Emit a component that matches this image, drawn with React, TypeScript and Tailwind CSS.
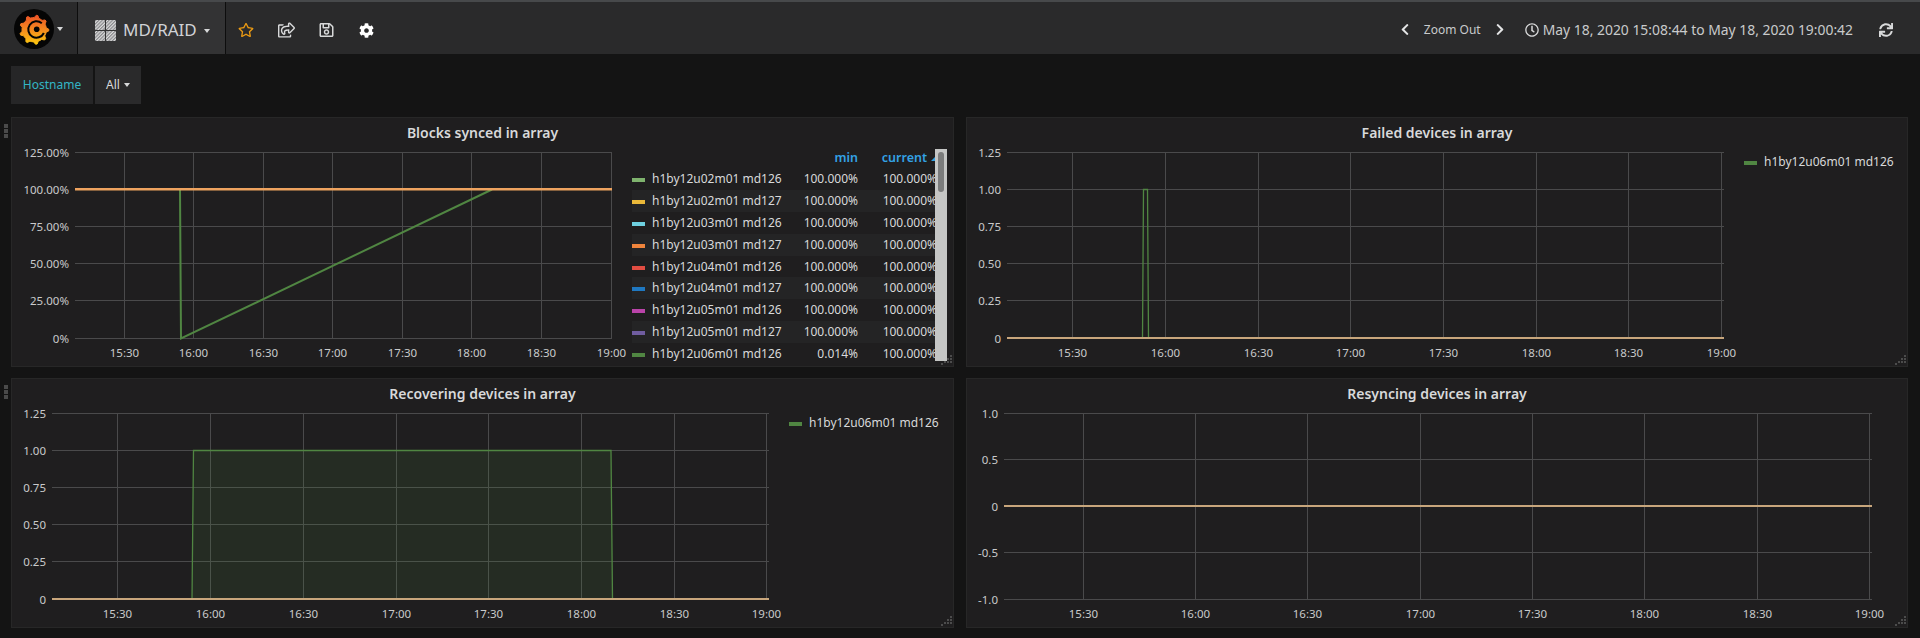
import React from "react";
import { FaRegStar, FaRegShareSquare, FaRegSave, FaCog, FaChevronLeft, FaChevronRight, FaRegClock, FaSync } from "react-icons/fa";

const FONT = '"Noto Sans","Open Sans",sans-serif';

function gearPath(cx: number, cy: number, rOut: number, rIn: number, teeth: number) {
  const pts: string[] = [];
  for (let i = 0; i < teeth; i++) {
    const a = (i / teeth) * Math.PI * 2 - Math.PI / 2 + 0.2;
    const s = (Math.PI * 2) / teeth;
    const list: [number, number][] = [
      [a - s * 0.5, rIn],
      [a - s * 0.28, rIn],
      [a - s * 0.08, rOut],
      [a + s * 0.08, rOut],
      [a + s * 0.28, rIn],
    ];
    for (const [t, r] of list) pts.push(`${(cx + Math.cos(t) * r).toFixed(2)},${(cy + Math.sin(t) * r).toFixed(2)}`);
  }
  return "M" + pts.join("L") + "Z";
}

function Logo() {
  return (
    <svg width="40" height="40" viewBox="0 0 40 40" className="shrink-0">
      <defs>
        <linearGradient id="grafana" x1="0" y1="0" x2="0" y2="1">
          <stop offset="0" stopColor="#ec5226" />
          <stop offset="0.5" stopColor="#f58a1f" />
          <stop offset="1" stopColor="#fcc80f" />
        </linearGradient>
      </defs>
      <circle cx="20" cy="20" r="20" fill="#050505" />
      <path d={gearPath(20.2, 20.7, 14.6, 12.2, 9)} fill="url(#grafana)" stroke="url(#grafana)" strokeWidth="1" strokeLinejoin="round" />
      <path d="M27.8 14.2 A8.2 8.2 0 1 0 29.9 24" fill="none" stroke="#050505" strokeWidth="2" />
      <path d="M27.5 20.5 A5.2 5.2 0 1 0 23 25.2" fill="none" stroke="#f7a31c" strokeWidth="0" />
      <circle cx="22.7" cy="20.2" r="2.8" fill="#050505" />
    </svg>
  );
}

function Caret() {
  return <span className="inline-block w-0 h-0 border-x-[3.5px] border-t-[4px] border-x-transparent border-t-[#d8d9da]" />;
}

function GridIcon() {
  return (
    <svg width="21" height="21" viewBox="0 0 21 21" className="shrink-0">
      <defs>
        <pattern id="hatch" width="2.4" height="2.4" patternUnits="userSpaceOnUse" patternTransform="rotate(45)">
          <rect width="2.4" height="2.4" fill="#dcdcdc" />
          <rect width="1.2" height="2.4" fill="#86878a" />
        </pattern>
      </defs>
      <rect x="0" y="0" width="10" height="10" rx="1" fill="url(#hatch)" />
      <rect x="11" y="0" width="10" height="10" rx="1" fill="url(#hatch)" />
      <rect x="0" y="11" width="10" height="10" rx="1" fill="url(#hatch)" />
      <rect x="11" y="11" width="10" height="10" rx="1" fill="url(#hatch)" />
    </svg>
  );
}

type Line = { d: string; color: string; width: number; fill?: string };
type ChartProps = {
  x0: number;
  y0: number;
  w: number;
  h: number;
  left: number;
  right: number;
  xTicks: number[];
  yTicks: { y: number; label: string }[];
  lines: Line[];
  labelY: number;
};

const TIMES = ["15:30", "16:00", "16:30", "17:00", "17:30", "18:00", "18:30", "19:00"];

function Chart({ x0, y0, w, h, left, right, xTicks, yTicks, lines, labelY }: ChartProps) {
  const top = yTicks[0].y;
  const bottom = yTicks[yTicks.length - 1].y;
  return (
    <svg width={w} height={h} viewBox={`${x0} ${y0} ${w} ${h}`} className="shrink-0 block">
      <g shapeRendering="crispEdges" stroke="#4a4a4b" strokeWidth="1">
        {yTicks.map((t) => (
          <line key={t.y} x1={left} x2={right} y1={t.y + 0.5} y2={t.y + 0.5} />
        ))}
        {xTicks.map((x) => (
          <line key={x} x1={x + 0.5} x2={x + 0.5} y1={top} y2={bottom} />
        ))}
      </g>
      {lines.map((l, i) => (
        <path key={i} d={l.d} fill={l.fill ?? "none"} stroke={l.color} strokeWidth={l.width} />
      ))}
      <g fontSize="11.5" fill="#c9cacb" fontFamily={FONT}>
        {yTicks.map((t) => (
          <text key={t.label} x={left - 6} y={t.y + 4.5} textAnchor="end">
            {t.label}
          </text>
        ))}
        {xTicks.map((x, i) => (
          <text key={x} x={x + 0.5} y={labelY} textAnchor="middle">
            {TIMES[i]}
          </text>
        ))}
      </g>
    </svg>
  );
}

function Panel({ title, handle, children }: { title: string; handle?: boolean; children: React.ReactNode }) {
  return (
    <div className="relative h-[250px] box-border border border-[#272727] bg-[#1f1e1f] flex flex-col">
      {handle && (
        <div className="absolute left-[-8px] top-[6px] flex flex-col gap-[1px]">
          <span className="block w-[4px] h-[4px] bg-[#4a4a4a]" />
          <span className="block w-[4px] h-[4px] bg-[#4a4a4a]" />
          <span className="block w-[4px] h-[4px] bg-[#4a4a4a]" />
        </div>
      )}
      <div className="h-[27px] flex items-center justify-center text-[14px] font-semibold text-[#d8d9da] pt-[1px]">{title}</div>
      <div className="flex-1 flex min-h-0">{children}</div>
      <svg width="12" height="12" viewBox="0 0 12 12" className="absolute right-0 bottom-0" fill="#4c4c4c">
        <rect x="9" y="1" width="2" height="2" />
        <rect x="6" y="4" width="2" height="2" />
        <rect x="9" y="4" width="2" height="2" />
        <rect x="3" y="7" width="2" height="2" />
        <rect x="6" y="7" width="2" height="2" />
        <rect x="9" y="7" width="2" height="2" />
        <rect x="0" y="9" width="2" height="2" />
      </svg>
    </div>
  );
}

const ROWS = [
  ["#7eb26d", "h1by12u02m01 md126", "100.000%"],
  ["#eab839", "h1by12u02m01 md127", "100.000%"],
  ["#6ed0e0", "h1by12u03m01 md126", "100.000%"],
  ["#ef843c", "h1by12u03m01 md127", "100.000%"],
  ["#e24d42", "h1by12u04m01 md126", "100.000%"],
  ["#1f78c1", "h1by12u04m01 md127", "100.000%"],
  ["#ba43a9", "h1by12u05m01 md126", "100.000%"],
  ["#705da0", "h1by12u05m01 md127", "100.000%"],
  ["#508642", "h1by12u06m01 md126", "0.014%"],
];

function LegendName({ color, name }: { color: string; name: string }) {
  return (
    <>
      <span className="block w-[13px] h-[4px] mt-[2px] mr-[7px] shrink-0" style={{ background: color }} />
      <span className="whitespace-nowrap text-[#d8d9da] text-[12px]">{name}</span>
    </>
  );
}

function TableLegend() {
  return (
    <div className="mt-[4px] w-[315px] h-[212px] overflow-hidden flex shrink-0">
      <div className="w-[303px] overflow-hidden">
        <div className="w-[320px]">
          <div className="h-[19px] flex items-center text-[12.5px] font-semibold text-[#33a2e5]">
            <span className="w-[226px] text-right">min</span>
            <span className="w-[69px] text-right">current</span>
            <span className="ml-[4px] w-0 h-0 border-x-[4px] border-b-[4px] border-x-transparent border-b-[#33a2e5]" />
          </div>
          {ROWS.map((r, i) => (
            <div key={r[1]} className={`h-[21.9px] flex items-center ${i % 2 === 1 ? "bg-[#242425]" : ""}`}>
              <LegendName color={r[0]} name={r[1]} />
              <span className="flex-1" />
              <span className="w-[70px] text-right text-[12px] text-[#d8d9da]">{r[2]}</span>
              <span className="w-[79px] mr-[15px] text-right text-[12px] text-[#d8d9da]">100.000%</span>
            </div>
          ))}
        </div>
      </div>
      <div className="w-[12px] bg-[#c5c6c5] pt-[3px] pl-[3px]">
        <div className="w-[6px] h-[40px] rounded-[3px] bg-[#7b7c7c]" />
      </div>
    </div>
  );
}

function SimpleLegend() {
  return (
    <div className="pt-[8px] flex items-center h-[26px]">
      <LegendName color="#508642" name="h1by12u06m01 md126" />
    </div>
  );
}

const yRow1 = (labels: string[]) => [152, 189, 226, 263, 300, 338].map((y, i) => ({ y, label: labels[i] }));
const yRow2 = (labels: string[]) => [413, 450, 487, 524, 561, 599].map((y, i) => ({ y, label: labels[i] }));
const DEC = ["1.25", "1.00", "0.75", "0.50", "0.25", "0"];

export default function App() {
  return (
    <div className="w-[1920px] h-[638px] overflow-hidden bg-[#141414]" style={{ fontFamily: FONT }}>
      <div className="h-[2px] bg-[#47494b]" />
      <div className="h-[52px] bg-[#2a2a2b] flex items-center text-[#d8d9da]">
        <div className="w-[77px] h-full flex items-center pl-[14px] gap-[3px] mt-[2px]">
          <Logo />
          <Caret />
        </div>
        <div className="h-full w-[149px] box-border bg-[#333334] border-x border-[#0d0d0d] flex items-center pl-[17px] pt-[4px]">
          <GridIcon />
          <span className="ml-[7px] text-[17px] text-[#d0d2d6]">MD/RAID</span>
          <span className="ml-[7px] mt-[2px] flex"><Caret /></span>
        </div>
        <div className="flex items-center text-[16px] ml-[12px] mt-[4px]">
          <FaRegStar className="text-[#eb9a13] w-[16px] h-[16px]" />
          <FaRegShareSquare className="ml-[24px] w-[17px] h-[16px]" />
          <FaRegSave className="ml-[24px] w-[15px] h-[16px]" />
          <FaCog className="ml-[25px] w-[15px] h-[15px] text-white" />
        </div>
        <div className="flex-1" />
        <div className="flex items-center mt-[4px]">
          <FaChevronLeft className="w-[10px] h-[13px] text-[#e4e5e6]" />
          <span className="ml-[14px] text-[12px] text-[#c9cacb]">Zoom Out</span>
          <FaChevronRight className="ml-[14px] w-[10px] h-[13px] text-[#e4e5e6]" />
          <FaRegClock className="ml-[20px] w-[14px] h-[14px]" />
          <span className="ml-[4px] text-[13.9px] whitespace-nowrap text-[#c9cacb]">May 18, 2020 15:08:44 to May 18, 2020 19:00:42</span>
          <FaSync className="ml-[26px] mr-[27px] w-[14px] h-[14px]" />
        </div>
      </div>
      <div className="pl-[11px] pt-[12px] h-[63px] flex gap-[2px]">
        <div className="w-[82px] h-[38px] bg-[#262627] flex items-center justify-center text-[12px] text-[#33b5c5]">Hostname</div>
        <div className="w-[46px] h-[38px] bg-[#2a2a2b] flex items-center justify-center gap-[4px] text-[12px] text-[#d8d9da]">
          All <Caret />
        </div>
      </div>
      <div className="pl-[11px] grid grid-cols-[943px_942px] gap-x-[12px] gap-y-[11px]">
        <Panel title="Blocks synced in array" handle>
          <Chart
            x0={12}
            y0={145}
            w={620}
            h={221}
            left={75}
            right={612}
            labelY={357}
            xTicks={[124, 193, 263, 332, 402, 471, 541, 611]}
            yTicks={yRow1(["125.00%", "100.00%", "75.00%", "50.00%", "25.00%", "0%"])}
            lines={[
              { d: "M180 189.5 L181 338.5 L492 189.5", color: "#508642", width: 2 },
              { d: "M75 189.3 H612", color: "#eea35f", width: 2.6 },
            ]}
          />
          <TableLegend />
        </Panel>
        <Panel title="Failed devices in array">
          <Chart
            x0={967}
            y0={145}
            w={777}
            h={221}
            left={1007}
            right={1724}
            labelY={357}
            xTicks={[1072, 1165, 1258, 1350, 1443, 1536, 1628, 1721]}
            yTicks={yRow1(DEC)}
            lines={[
              { d: "M1142.5 338 L1143.5 189.5 H1147.5 L1148.5 338", color: "#508642", width: 1.3 },
              { d: "M1007 338 H1724", color: "#c8a67c", width: 2 },
            ]}
          />
          <SimpleLegend />
        </Panel>
        <Panel title="Recovering devices in array" handle>
          <Chart
            x0={12}
            y0={406}
            w={777}
            h={221}
            left={52}
            right={769}
            labelY={618}
            xTicks={[117, 210, 303, 396, 488, 581, 674, 766]}
            yTicks={yRow2(DEC)}
            lines={[
              { d: "M192 599.5 L193.5 450.5 H611 L612.5 599.5 Z", color: "none", width: 0, fill: "rgba(80,134,66,0.14)" },
              { d: "M192 599.5 L193.5 450.5 H611 L612.5 599.5", color: "#508642", width: 1.3 },
              { d: "M52 599 H769", color: "#c8a67c", width: 2 },
            ]}
          />
          <SimpleLegend />
        </Panel>
        <Panel title="Resyncing devices in array">
          <Chart
            x0={967}
            y0={406}
            w={940}
            h={221}
            left={1004}
            right={1872}
            labelY={618}
            xTicks={[1083, 1195, 1307, 1420, 1532, 1644, 1757, 1869]}
            yTicks={[
              { y: 413, label: "1.0" },
              { y: 459, label: "0.5" },
              { y: 506, label: "0" },
              { y: 552, label: "-0.5" },
              { y: 599, label: "-1.0" },
            ]}
            lines={[{ d: "M1004 506 H1872", color: "#c8a67c", width: 2 }]}
          />
        </Panel>
      </div>
    </div>
  );
}
